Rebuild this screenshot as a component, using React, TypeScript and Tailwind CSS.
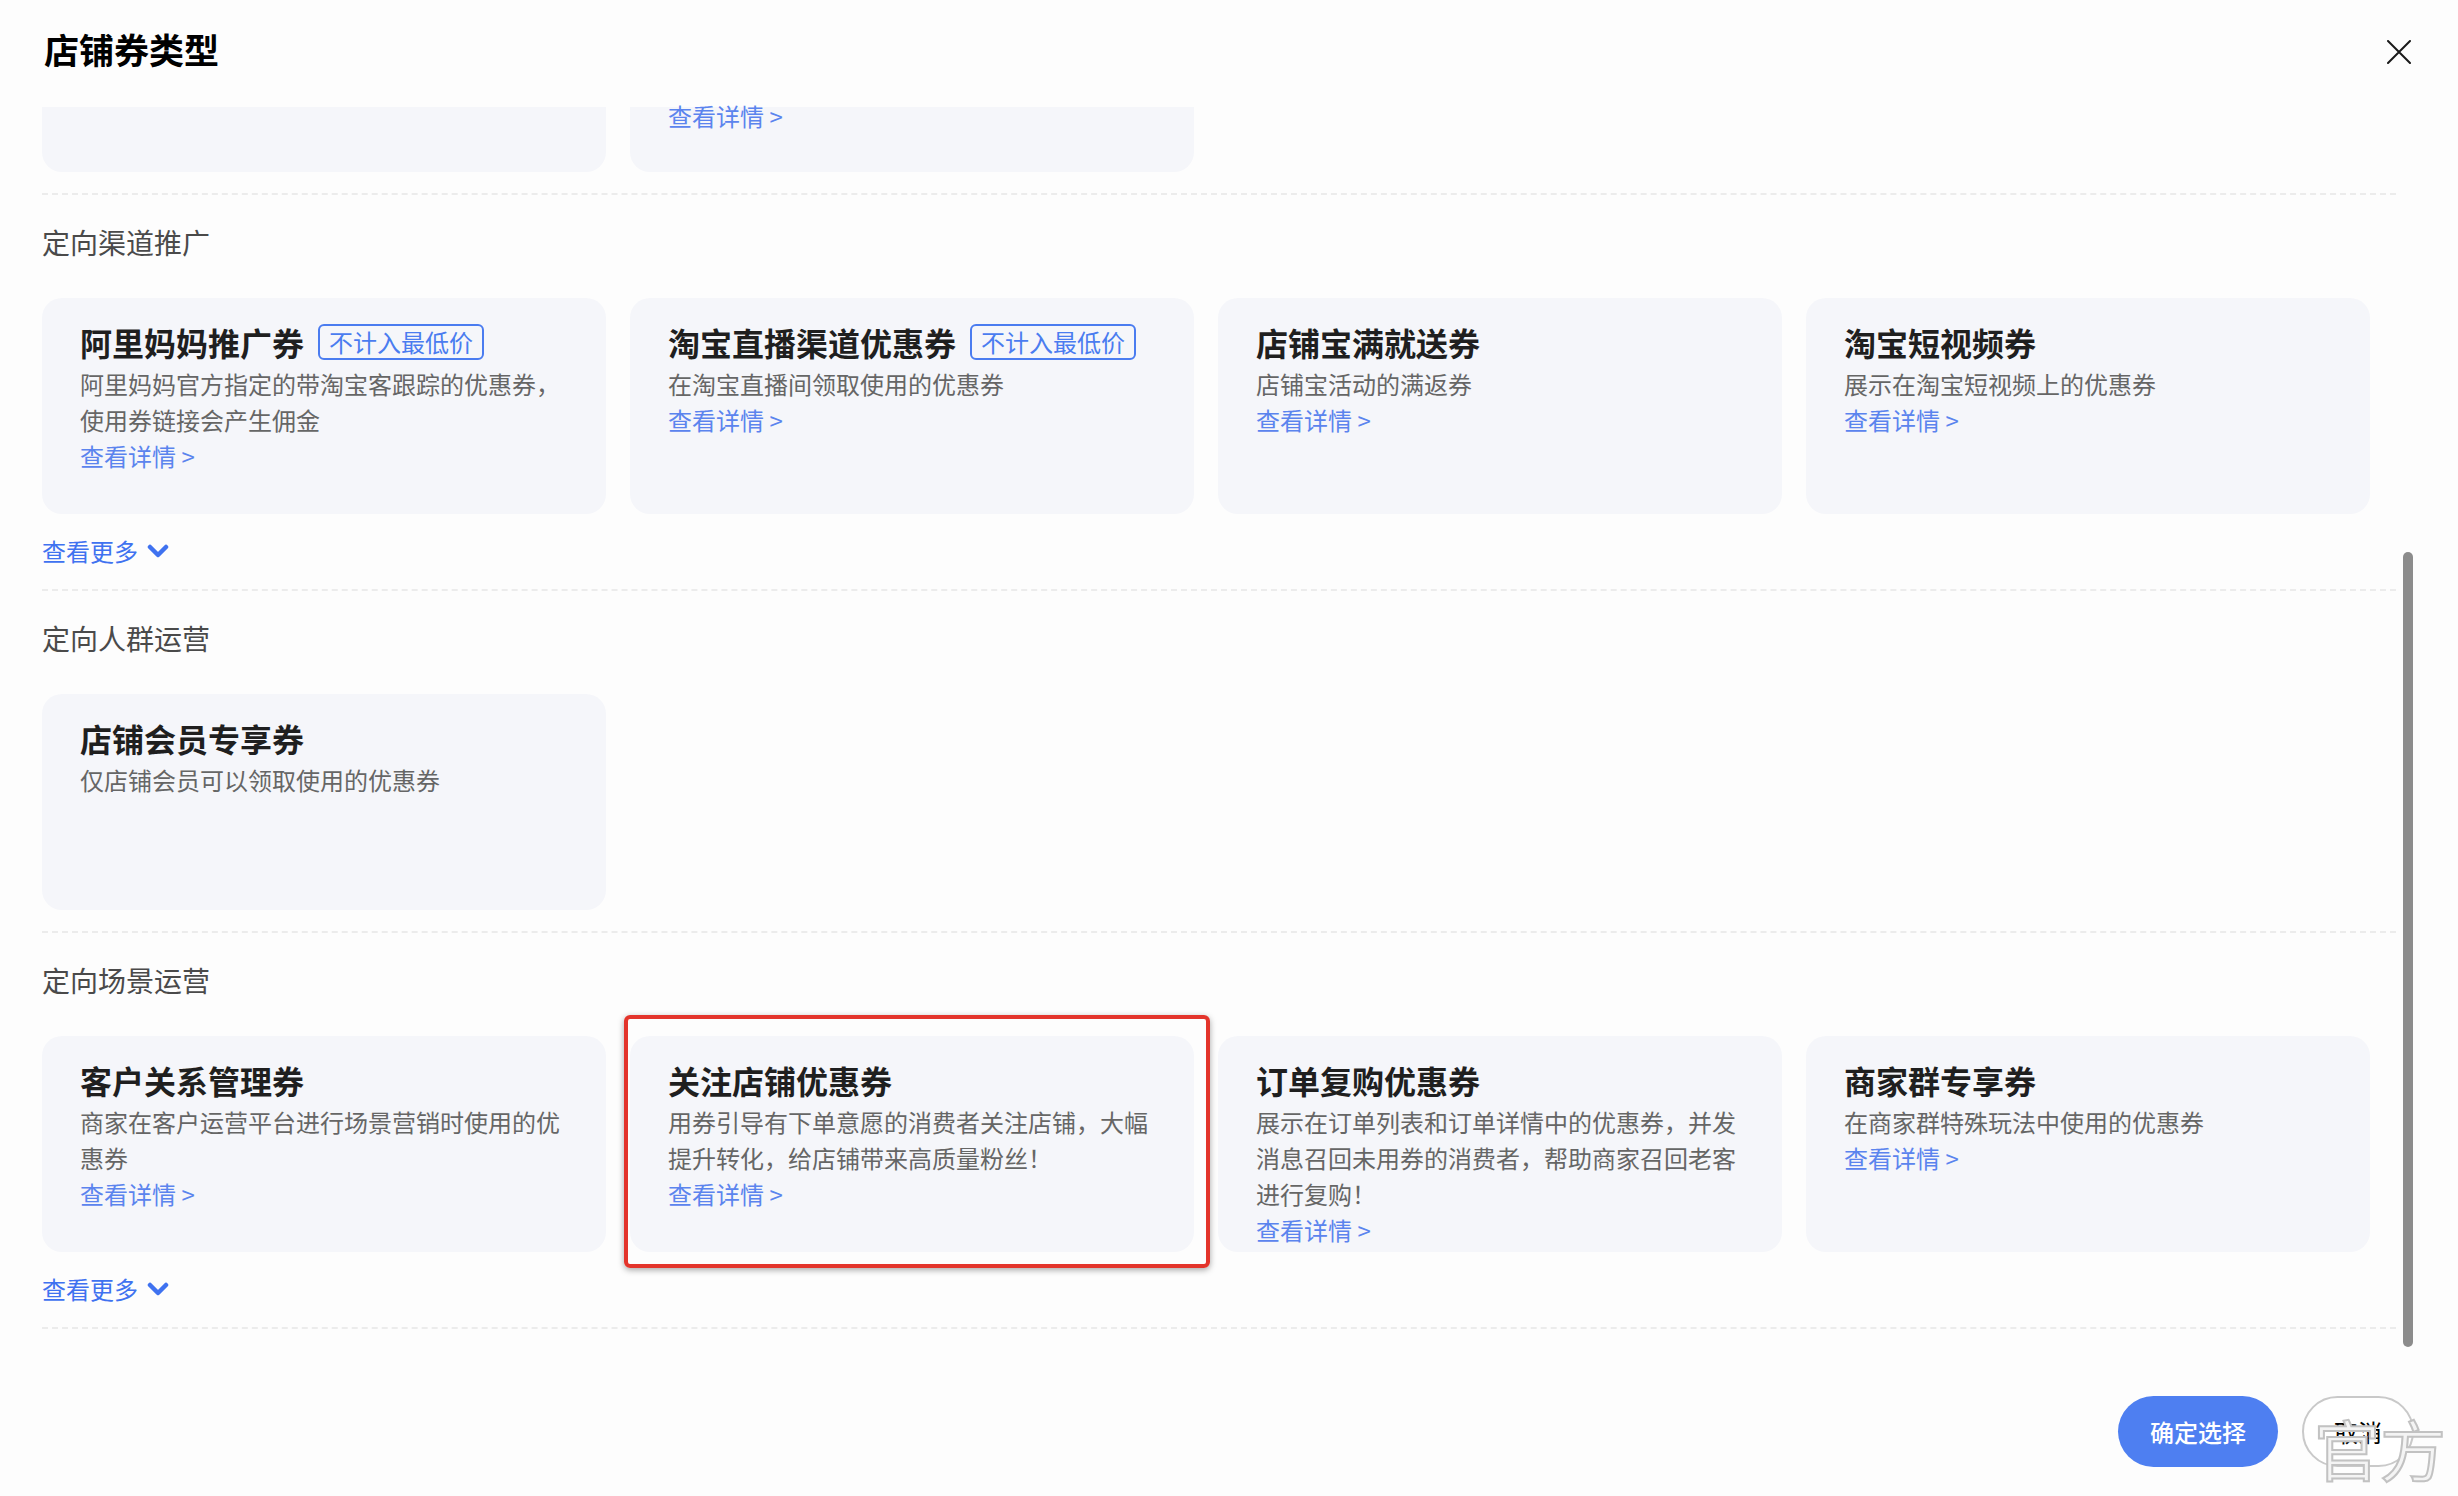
type Card = {
  title: string;
  desc: string;
  tag?: boolean;
  link?: boolean;
  marked?: boolean;
};

type Section = {
  name: string;
  more?: boolean;
  cards: Card[];
};

const sections: Section[] = [
  {
    name: "定向渠道推广",
    more: true,
    cards: [
      { title: "阿里妈妈推广券", tag: true, desc: "阿里妈妈官方指定的带淘宝客跟踪的优惠券，使用券链接会产生佣金", link: true },
      { title: "淘宝直播渠道优惠券", tag: true, desc: "在淘宝直播间领取使用的优惠券", link: true },
      { title: "店铺宝满就送券", desc: "店铺宝活动的满返券", link: true },
      { title: "淘宝短视频券", desc: "展示在淘宝短视频上的优惠券", link: true },
    ],
  },
  {
    name: "定向人群运营",
    cards: [{ title: "店铺会员专享券", desc: "仅店铺会员可以领取使用的优惠券" }],
  },
  {
    name: "定向场景运营",
    more: true,
    cards: [
      { title: "客户关系管理券", desc: "商家在客户运营平台进行场景营销时使用的优惠券", link: true },
      { title: "关注店铺优惠券", desc: "用券引导有下单意愿的消费者关注店铺，大幅提升转化，给店铺带来高质量粉丝！", link: true, marked: true },
      { title: "订单复购优惠券", desc: "展示在订单列表和订单详情中的优惠券，并发消息召回未用券的消费者，帮助商家召回老客进行复购！", link: true },
      { title: "商家群专享券", desc: "在商家群特殊玩法中使用的优惠券", link: true },
    ],
  },
];

function Divider() {
  return <div className="w-[2354px] border-t-2 border-dashed border-[#ececec]" />;
}

function CouponCard({ card }: { card: Card }) {
  return (
    <div className="relative h-[216px] rounded-[20px] bg-[#f5f6fa] px-[38px] pt-[20px]">
      <div className="flex h-[48px] items-center">
        <span className="text-[32px] font-bold leading-[48px] text-[#1f1f1f]">{card.title}</span>
        {card.tag && (
          <span className="ml-[14px] flex h-[36px] items-center rounded-[6px] border-2 border-[#4a7cf0] px-[9px] text-[24px] leading-none text-[#4a7cf0]">
            不计入最低价
          </span>
        )}
      </div>
      <p className="text-[24px] leading-[36px] text-[#666]">{card.desc}</p>
      {card.link && <div className="text-[24px] leading-[36px] text-[#5b84ee]">查看详情 &gt;</div>}
      {card.marked && (
        <div className="pointer-events-none absolute -left-[6px] -top-[21px] z-10 h-[253px] w-[586px] rounded-[6px] border-4 border-[#e3342b] shadow-[0_2px_6px_rgba(0,0,0,0.35)]" />
      )}
    </div>
  );
}

function MoreLink() {
  return (
    <div className="mt-[19px] flex h-[36px] items-center gap-[9px] text-[24px] text-[#3f72f0]">
      <span>查看更多</span>
      <svg width="22" height="14" viewBox="0 0 22 14">
        <polyline points="3,3 11,11 19,3" fill="none" stroke="#3f72f0" strokeWidth="4.5" strokeLinecap="round" strokeLinejoin="round" />
      </svg>
    </div>
  );
}

export default function App() {
  return (
    <div className="relative flex h-[1496px] w-[2458px] flex-col overflow-hidden bg-[#fdfdfd] font-['Noto_Sans_CJK_SC','Noto_Sans',sans-serif]">
      {/* header */}
      <div className="flex h-[107px] shrink-0 items-start justify-between pl-[44px] pr-[47px]">
        <h1 className="mt-[25px] text-[35px] font-bold leading-[48px] text-black">店铺券类型</h1>
        <svg width="24" height="24" viewBox="0 0 24 24" className="mt-[40px]">
          <path d="M1 1 L23 23 M23 1 L1 23" stroke="#1a1a1a" strokeWidth="2" strokeLinecap="round" fill="none" />
        </svg>
      </div>

      {/* scrolled body */}
      <div className="relative h-[1260px] shrink-0 pl-[42px]">
        <div className="grid grid-cols-[repeat(4,564px)] gap-x-[24px]">
          <div className="h-[65px] rounded-b-[20px] bg-[#f5f6fa]" />
          <div className="h-[65px] rounded-b-[20px] bg-[#f5f6fa] px-[38px] text-[24px] leading-[18px] text-[#5b84ee]">
            查看详情 &gt;
          </div>
        </div>
        <div className="mt-[21px]">
          <Divider />
        </div>

        {sections.map((s) => (
          <div key={s.name}>
            <div className="pt-[27px] text-[28px] leading-[40px] text-[#4a4a4a]">{s.name}</div>
            <div className="mt-[36px] grid grid-cols-[repeat(4,564px)] gap-x-[24px]">
              {s.cards.map((c) => (
                <CouponCard key={c.title} card={c} />
              ))}
            </div>
            {s.more ? (
              <div className="pb-[20px]">
                <MoreLink />
              </div>
            ) : (
              <div className="h-[21px]" />
            )}
            <Divider />
          </div>
        ))}

        {/* scrollbar */}
        <div className="absolute left-[2403px] top-[445px] h-[795px] w-[10px] rounded-full bg-[#8c8c8c]" />
      </div>

      {/* footer */}
      <div className="flex flex-1 items-center justify-end gap-[24px] pr-[44px]">
        <button className="h-[71px] w-[160px] rounded-full bg-[#4e7ff1] text-[24px] font-medium text-white">确定选择</button>
        <button className="h-[71px] w-[112px] rounded-full border-2 border-[#c9c9c9] bg-white text-[24px] text-black">取消</button>
      </div>

      {/* watermark */}
      <div className="pointer-events-none absolute left-[2314px] top-[1414px] text-[66px] leading-none text-[#f4f4f4] [-webkit-text-stroke:2px_#c2c2c2]">
        官方
      </div>
    </div>
  );
}
